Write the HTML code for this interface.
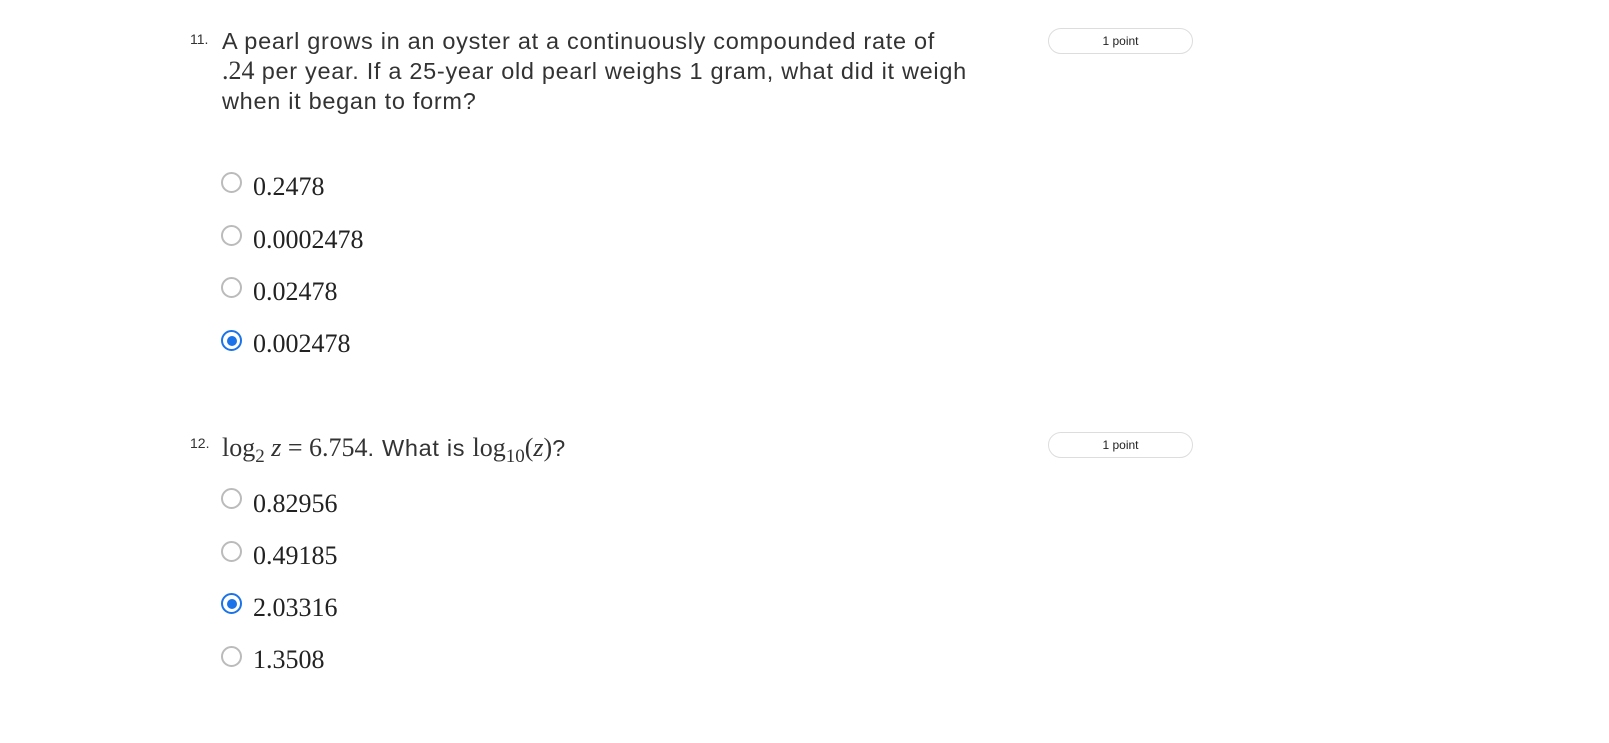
<!DOCTYPE html>
<html><head><style>
body{margin:0;background:#fff;width:1609px;height:743px;position:relative;font-family:"Liberation Sans",sans-serif;color:#333;overflow:hidden}
.abs{position:absolute;white-space:nowrap}
.num{font-size:14px;color:#333}
.q{font-size:23.5px;line-height:30px;letter-spacing:0.7px}
.m{font-family:"Liberation Serif",serif;font-size:26px;letter-spacing:0}
.opt{font-family:"Liberation Serif",serif;font-size:26px;color:#222}
.r{position:absolute;width:17px;height:17px;border:2px solid #bbb;border-radius:50%;box-sizing:content-box}
.r.on{border-color:#1a73e8}
.r.on::after{content:"";position:absolute;left:3.5px;top:3.5px;width:10px;height:10px;border-radius:50%;background:#1a73e8}
.pt{position:absolute;left:1048px;width:143px;height:24px;border:1px solid #ddd;border-radius:13px;font-size:12px;text-align:center;line-height:24px;color:#222}
</style></head><body>
<div class="abs num" style="left:190px;top:31px">11.</div>
<div class="abs q" style="left:222px;top:26px">A pearl grows in an oyster at a continuously compounded rate of<br><span class="m">.24</span> per year. If a 25-year old pearl weighs 1 gram, what did it weigh<br>when it began to form?</div>
<div class="pt" style="top:28px">1 point</div>

<div class="r" style="left:221px;top:172px"></div><div class="abs opt" style="left:253px;top:172px">0.2478</div>
<div class="r" style="left:221px;top:225px"></div><div class="abs opt" style="left:253px;top:225px">0.0002478</div>
<div class="r" style="left:221px;top:277px"></div><div class="abs opt" style="left:253px;top:277px">0.02478</div>
<div class="r on" style="left:221px;top:330px"></div><div class="abs opt" style="left:253px;top:329px">0.002478</div>

<div class="abs num" style="left:190px;top:435px">12.</div>
<div class="abs q" style="left:222px;top:433px"><span class="m">log<sub style="font-size:19px">2</sub> <i>z</i> = 6.754</span>. What is <span class="m">log<sub style="font-size:19px">10</sub>(<i>z</i>)</span>?</div>
<div class="pt" style="top:432px">1 point</div>

<div class="r" style="left:221px;top:488px"></div><div class="abs opt" style="left:253px;top:489px">0.82956</div>
<div class="r" style="left:221px;top:541px"></div><div class="abs opt" style="left:253px;top:541px">0.49185</div>
<div class="r on" style="left:221px;top:593px"></div><div class="abs opt" style="left:253px;top:593px">2.03316</div>
<div class="r" style="left:221px;top:646px"></div><div class="abs opt" style="left:253px;top:645px">1.3508</div>
</body></html>
